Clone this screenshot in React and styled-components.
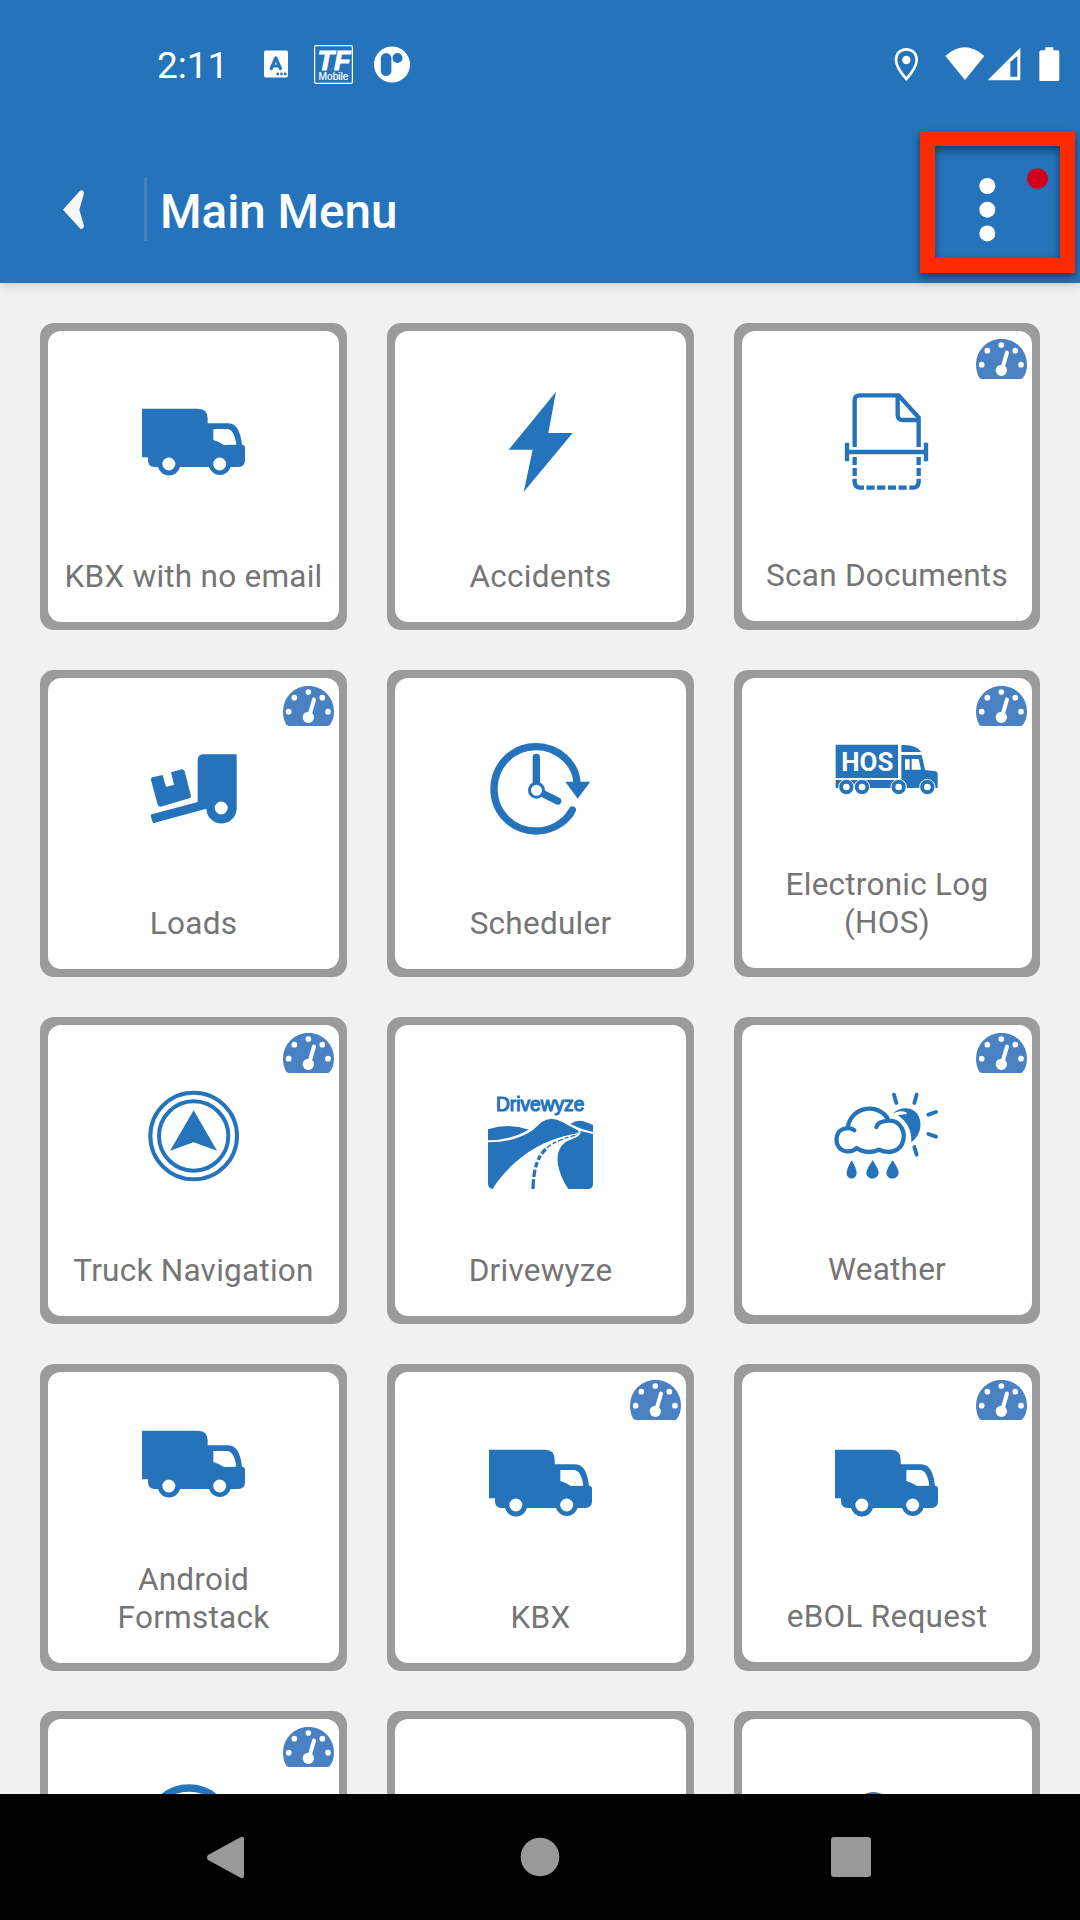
import React from "react";
import styled, { createGlobalStyle } from "styled-components";

const BLUE = "#2574bb";

const GlobalStyle = createGlobalStyle`
  * { box-sizing: border-box; }
  body { margin: 0; background: #f1f1f1; font-family: Roboto, "Liberation Sans", sans-serif; }
  svg { display: block; flex: none; }
`;

const Screen = styled.div`
  position: relative;
  display: flex;
  flex-direction: column;
  width: 1080px;
  height: 1920px;
  overflow: hidden;
  background: #f1f1f1;
`;

const Header = styled.header`
  position: relative;
  z-index: 1;
  flex: none;
  height: 283px;
  background: ${BLUE};
  box-shadow: 0 2px 10px rgba(0, 0, 0, 0.16);
`;

const StatusBar = styled.div`
  display: flex;
  align-items: center;
  justify-content: space-between;
  height: 129px;
  padding: 0 20px 1px 157px;
`;

const StatusGroup = styled.div`
  display: flex;
  align-items: center;
`;

const Clock = styled.span`
  width: 107px;
  padding-top: 4px;
  color: #fff;
  font-size: 37px;
  line-height: 44px;
`;

const Slot = styled.span`
  margin-left: ${(p) => p.$gap}px;
`;

const Toolbar = styled.div`
  display: flex;
  align-items: center;
  height: 161px;
  padding: 0 30px 0 63px;
`;

const Divider = styled.span`
  width: 3px;
  height: 63px;
  margin: 0 13px 0 60px;
  background: #4a80c0;
`;

const Title = styled.h1`
  flex: 1;
  margin: 0;
  color: #fff;
  font-size: 47.5px;
  font-weight: 500;
  line-height: 56px;
  padding-top: 5px;
`;

const MenuButton = styled.button`
  border: 0;
  padding: 0;
  background: none;
`;

const Highlight = styled.div`
  position: absolute;
  left: 920px;
  top: 131px;
  width: 155px;
  height: 142px;
  border: 15px solid #ff2a00;
  filter: drop-shadow(0 4px 4px rgba(0, 0, 0, 0.5));
`;

const Main = styled.main`
  flex: 1;
  min-height: 0;
  overflow: hidden;
  padding: 40px;
`;

const Grid = styled.div`
  display: grid;
  grid-template-columns: 307px 307px 306px;
  grid-auto-rows: 307px;
  gap: 40px;
`;

const Card = styled.div`
  position: relative;
  display: flex;
  flex-direction: column;
  align-items: center;
  border: 8px solid #9b9b9b;
  border-radius: 14px;
  background: #9b9b9b;
  padding-bottom: ${(p) => (p.$short ? 1 : 0)}px;
`;

const Face = styled.div`
  flex: 1;
  align-self: stretch;
  display: flex;
  flex-direction: column;
  align-items: center;
  border-radius: 13px;
  background: #fff;
  padding-bottom: 26px;
`;

const IconArea = styled.div`
  flex: 1;
  display: flex;
  align-items: center;
  justify-content: center;
  padding-bottom: 5px;
`;

const Label = styled.div`
  color: #757575;
  font-size: 31.5px;
  line-height: 38px;
  letter-spacing: 0.25px;
  text-align: center;
  white-space: pre-line;
`;

const Badge = styled.span`
  position: absolute;
  top: 8px;
  right: 5px;
`;

const NavBar = styled.nav`
  flex: none;
  display: flex;
  align-items: center;
  justify-content: space-between;
  height: 126px;
  padding: 0 209px 0 207px;
  background: #000;
`;

const Icon = ({ origin, children }) => (
  <svg width="120" height="120" viewBox={`${origin} 360 360`} fill={BLUE}>{children}</svg>
);

const Gauge = () => (
  <svg width="51" height="40" viewBox="738 87 153 120">
    <path fill="#4a81c3" d="M750 207C741 194 738 180 738 163a76.500 76.500 0 0 1 153 0C891 180 887 195 878 204Q876 207 872 207H756Q752 207 750 204Z" />
    <g fill="#fff">
      <circle cx="755" cy="164" r="8.500" /><circle cx="772" cy="122" r="8.500" />
      <circle cx="814" cy="105" r="8.500" /><circle cx="856" cy="122" r="8.500" />
      <circle cx="873" cy="164" r="8.500" /><circle cx="814" cy="181" r="17" />
    </g>
    <path d="M831 128L817 176" stroke="#fff" strokeWidth="12" strokeLinecap="round" />
  </svg>
);

const Truck = () => (
  <Icon origin="312 215">
    <path fillRule="evenodd" d="M336 295H505Q533 296 533 324V339H595C620 339 632 366 636 403Q645 404 645 412V450Q645 470 625 470H602A34 34 0 0 1 537 470H450A34 34 0 0 1 384 470H373Q354 469 354 449V441H336ZM550 356V389Q566 393 582 404L619 403Q613 357 590 356ZM436 461a19.500 19.500 0 1 0-39 0a19.500 19.500 0 1 0 39 0ZM588.500 461a19.500 19.500 0 1 0-39 0a19.500 19.500 0 1 0 39 0Z" />
  </Icon>
);

const Bolt = () => (
  <Icon origin="33 36"><path d="M258 65L116 239H188L161 366L308 189H235Z" /></Icon>
);

const Scan = () => (
  <Icon origin="291 216">
    <g fill="none" stroke={BLUE} strokeWidth="13">
      <path d="M374 411V271Q374 256 389 256H506L566 323V411" />
      <path d="M503 257V314Q503 330 519 330H568" />
      <path d="M351 398V454M588 398V454M351 426H588" />
      <path d="M374 441V465M374 474V498M566 441V465M566 474V498M374 506V517Q376 533 390 533H402M566 506V517Q564 533 550 533H538M409 533H434M441 533H466M474 533H498M506 533H530" />
    </g>
  </Icon>
);

const Loads = () => (
  <Icon origin="12 177">
    <path d="M67 322L98 315L108 351L132 344L123 307L156 298Q161 298 164 304L183 378Q183 383 178 385L92 410Q86 410 83 404L63 330Q62 324 67 322Z" />
    <path fillRule="evenodd" d="M219 253H320V414A45.500 45.500 0 0 1 229 416L69 460L62 437Q63 433 68 432L203 396V269Q204 254 219 253ZM293 414a19.500 19.500 0 1 0-39 0a19.500 19.500 0 1 0 39 0Z" />
  </Icon>
);

const Clocked = () => (
  <Icon origin="33 27">
    <g fill="none" stroke={BLUE} strokeWidth="22" strokeLinecap="round">
      <path strokeLinecap="butt" d="M321 190C319 130 263 80 198 80C127 80 72 137 72 207C72 277 127 333 198 333C242 333 282 311 304 276" />
      <path d="M307 270L300 282" />
      <path d="M199 112V200M215 219L263 243" />
    </g>
    <path d="M286 185H361L323 236Z" />
    <circle cx="199.500" cy="211" r="21" fill="#fff" stroke={BLUE} strokeWidth="9" />
  </Icon>
);

const Wheel = ({ x }) => (
  <g>
    <circle cx={x} cy="201" r="23" fill={BLUE} stroke="#fff" strokeWidth="3" />
    <circle cx={x} cy="201" r="10" fill="#fff" />
  </g>
);

const HosTruck = () => (
  <Icon origin="291 -30">
    <path d="M317 74H504V174H317ZM317 180H514V105H575L585 150L617 154Q623 155 623 162V204H317ZM514 75C545 73 565 83 574 96H514Z" />
    <path fill="#fff" d="M525 118H539V149H525ZM545 117H566L573 149H545Z" />
    <Wheel x="349" /><Wheel x="396" /><Wheel x="506" /><Wheel x="592" />
    <text x="334" y="152" fill="#fff" fontFamily="Roboto, sans-serif" fontWeight="700" fontSize="76" textLength="156" lengthAdjust="spacingAndGlyphs">HOS</text>
  </Icon>
);

const Compass = () => (
  <Icon origin="12 168">
    <g fill="none" stroke={BLUE} strokeWidth="12">
      <circle cx="191" cy="348" r="130" /><circle cx="191" cy="348" r="104" />
    </g>
    <path d="M191 271L261 392L191 367L120 392Z" />
  </Icon>
);

const Drivewyze = () => (
  <Icon origin="1053 168">
    <text x="1098" y="273" fontFamily="'Liberation Sans', sans-serif" fontSize="60" stroke={BLUE} strokeWidth="3.500" textLength="265" lengthAdjust="spacingAndGlyphs">Drivewyze</text>
    <path d="M1074 328Q1137 308 1197 329Q1142 360 1074 361Z" />
    <path d="M1074 367Q1155 367 1208 331L1234 307Q1264 286 1298 307L1346 332Q1345 340 1327 343C1220 363 1135 431 1088 507Q1074 504 1074 491Z" />
    <path d="M1321 312Q1344 294 1373 308L1389 315V336Q1352 328 1321 312Z" />
    <path d="M1352 333L1389 342V491Q1389 507 1373 507H1315C1282 455 1268 397 1304 368C1319 357 1354 353 1352 333Z" />
    <g fill="none" stroke={BLUE}>
      <path d="M1209 507C1211 452 1218 417 1247 387" strokeWidth="10" strokeDasharray="29 7 22 7 17 7 15 7" />
      <path d="M1250 384Q1280 359 1336 346" strokeWidth="4" strokeDasharray="16 6 12 6" />
      <path d="M1336 346Q1346 341 1348 334" strokeWidth="1.500" />
    </g>
  </Icon>
);

const Weather = () => (
  <Icon origin="51 168">
    <path d="M246 282C270 259 306 260 322 282C338 305 335 344 304 367C306 332 292 305 263 286L291 282Q290 273 270 274Q256 276 246 282Z" />
    <g fill="none" stroke={BLUE} strokeWidth="13" strokeLinecap="round" strokeLinejoin="round">
      <path d="M133 331Q124 322 108 325C71 329 70 386 105 393Q126 398 140 384Q155 395 177 396Q194 396 207 389C236 402 265 395 276 372C292 336 269 301 237 302Q204 303 199 321M113 322C124 256 210 248 235 300" />
      <path strokeWidth="11.500" d="M252 224L259 249M320 224L313 249M355 284L378 276M355 342L378 350M313 381L320 404" />
    </g>
    <path d="M125 421Q140 446 140 459C140 481 110 481 110 459Q110 446 125 421ZM188 421Q206 447 206 459C204 481 170 481 169 459Q170 447 188 421ZM248 421Q266 447 266 459C264 481 230 481 229 459Q230 447 248 421Z" />
  </Icon>
);

const RingPeek = () => (
  <Icon origin="0 0"><circle cx="165" cy="176" r="122" fill="none" stroke={BLUE} strokeWidth="22" /></Icon>
);

const DiscPeek = () => (
  <Icon origin="0 0"><circle cx="139" cy="126" r="60" /></Icon>
);

const tiles = [
  { label: "KBX with no email", icon: Truck },
  { label: "Accidents", icon: Bolt },
  { label: "Scan Documents", icon: Scan, gauge: true },
  { label: "Loads", icon: Loads, gauge: true },
  { label: "Scheduler", icon: Clocked },
  { label: "Electronic Log\n(HOS)", icon: HosTruck, gauge: true },
  { label: "Truck Navigation", icon: Compass, gauge: true },
  { label: "Drivewyze", icon: Drivewyze },
  { label: "Weather", icon: Weather, gauge: true },
  { label: "Android\nFormstack", icon: Truck },
  { label: "KBX", icon: Truck, gauge: true },
  { label: "eBOL Request", icon: Truck, gauge: true },
  { label: "\u00a0", icon: RingPeek, gauge: true },
  { label: "", icon: null },
  { label: "\u00a0", icon: DiscPeek },
];

const Tile = ({ tile, short }) => {
  const Drawing = tile.icon;
  return (
    <Card $short={short}>
      <Face>
        <IconArea>{Drawing && <Drawing />}</IconArea>
        <Label>{tile.label}</Label>
      </Face>
      {tile.gauge && <Badge><Gauge /></Badge>}
    </Card>
  );
};

export default function App() {
  return (
    <Screen>
      <GlobalStyle />
      <Header>
        <StatusBar>
          <StatusGroup>
            <Clock>2:11</Clock>
            <svg width="24" height="28" viewBox="0 0 24 28">
              <rect y="0.500" width="24" height="27" rx="2" fill="#fff" />
              <path d="M7.200 18.500L11.800 8L16.400 18.500M8.500 16H15" fill="none" stroke={BLUE} strokeWidth="3.200" strokeLinecap="round" strokeLinejoin="round" />
              <g fill={BLUE}><circle cx="13.700" cy="24" r="1.400" /><circle cx="17.500" cy="24" r="1.400" /><circle cx="21.200" cy="24" r="1.400" /></g>
            </svg>
            <Slot $gap={26}>
              <svg width="39" height="39" viewBox="0 0 39 39" fill="#fff">
                <rect x="0.600" y="0.600" width="37.800" height="37.800" rx="1.500" fill="none" stroke="#fff" strokeWidth="1.200" />
                <text x="3.500" y="24.500" fontFamily="'Liberation Sans', sans-serif" fontWeight="700" fontStyle="italic" fontSize="28" stroke="#fff" strokeWidth="0.900" textLength="33" lengthAdjust="spacingAndGlyphs">TF</text>
                <text x="4.500" y="35" fontFamily="'Liberation Sans', sans-serif" fontSize="10.500" stroke="#fff" strokeWidth="0.200" textLength="30" lengthAdjust="spacingAndGlyphs">Mobile</text>
              </svg>
            </Slot>
            <Slot $gap={21}>
              <svg width="37" height="37" viewBox="0 0 37 37">
                <circle cx="18" cy="18.500" r="18" fill="#fff" />
                <rect x="6.800" y="7" width="10.600" height="23" rx="5.300" fill={BLUE} />
                <circle cx="23.500" cy="12" r="5" fill={BLUE} />
              </svg>
            </Slot>
          </StatusGroup>
          <StatusGroup>
            <svg width="25" height="34" viewBox="102 50 75 102">
              <path d="M139 57C119 57 108 71 108 89C108 111 127 132 139 146C151 132 170 111 170 89C170 71 159 57 139 57Z" fill="none" stroke="#fff" strokeWidth="8" />
              <circle cx="139" cy="89" r="12.500" fill="#fff" />
            </svg>
            <Slot $gap={26}>
              <svg width="40" height="34" viewBox="254 50 120 102"><path fill="#fff" d="M255 77Q313 25 372 77L314 149Z" /></svg>
            </Slot>
            <Slot $gap={2}>
              <svg width="34" height="34" viewBox="380 50 102 102"><path fill="#fff" fillRule="evenodd" d="M480 52V150H382ZM471 77L450 95V139H471Z" /></svg>
            </Slot>
            <Slot $gap={18}>
              <svg width="21" height="34" viewBox="536 50 63 102"><path fill="#fff" d="M555 51H579V60H592Q597 60 597 66V147Q597 153 591 153H543Q537 153 537 147V66Q537 60 543 60H555Z" /></svg>
            </Slot>
          </StatusGroup>
        </StatusBar>
        <Toolbar>
          <svg width="21" height="39" viewBox="99 90 63 117">
            <path fill="#f8f8f8" d="M99 149L150 92Q154 89 159 93Q163 97 161 103L148 149L161 194Q163 201 159 205Q153 209 149 204Z" />
          </svg>
          <Divider />
          <Title>Main Menu</Title>
          <MenuButton aria-label="More options">
            <svg width="74" height="86" viewBox="0 -10 74 86" fill="#fff">
              <circle cx="11.300" cy="9" r="8" /><circle cx="11.300" cy="32.700" r="8" /><circle cx="11.300" cy="56.400" r="8" />
              <circle cx="61.500" cy="1.700" r="10.500" fill="#d0021b" />
            </svg>
          </MenuButton>
        </Toolbar>
        <Highlight />
      </Header>
      <Main>
        <Grid>
          {tiles.map((tile, i) => <Tile key={i} tile={tile} short={i % 3 === 2} />)}
        </Grid>
      </Main>
      <NavBar>
        <svg width="42" height="43" viewBox="0 0 42 43"><path fill="#999" d="M1 19L34 1Q37 0 37 3V40Q37 43 34 42L1 24Q-1 21.500 1 19Z" /></svg>
        <svg width="40" height="40" viewBox="0 0 40 40"><circle cx="20" cy="20" r="19.300" fill="#999" /></svg>
        <svg width="40" height="40" viewBox="0 0 40 40"><rect width="40" height="40" rx="3" fill="#999" /></svg>
      </NavBar>
    </Screen>
  );
}
